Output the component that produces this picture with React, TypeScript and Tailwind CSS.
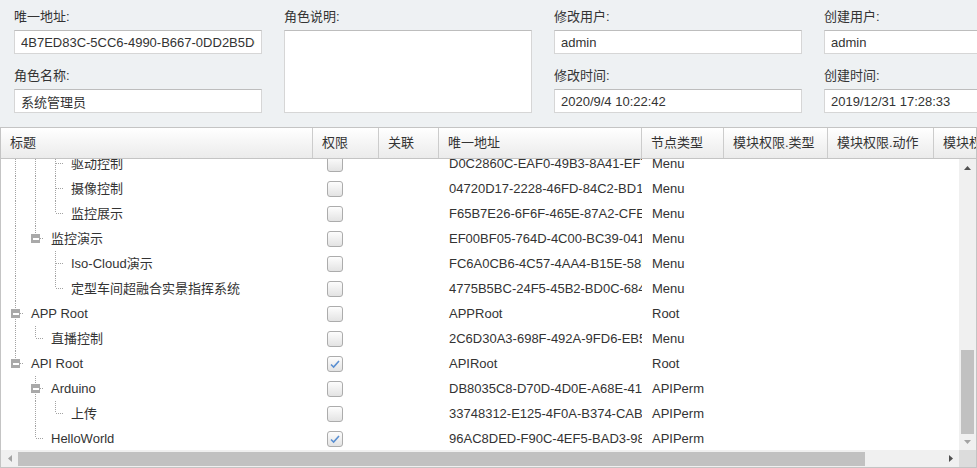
import React from 'react';

type Guide = 'n' | 'p' | 't' | 'l';

interface Row {
  title: string;
  guides: Guide[];
  folder?: boolean;
  checked?: boolean;
  uid: string;
  type: string;
}

const rows: Row[] = [
  { title: '驱动控制', guides: ['p', 'p', 't'], uid: 'D0C2860C-EAF0-49B3-8A41-EF72A1C3D5B0', type: 'Menu' },
  { title: '摄像控制', guides: ['p', 'p', 't'], uid: '04720D17-2228-46FD-84C2-BD1E9A0C7F31', type: 'Menu' },
  { title: '监控展示', guides: ['p', 'p', 'l'], uid: 'F65B7E26-6F6F-465E-87A2-CFE0B3D41A27', type: 'Menu' },
  { title: '监控演示', guides: ['p', 'l'], folder: true, uid: 'EF00BF05-764D-4C00-BC39-041A7D2E9C86', type: 'Menu' },
  { title: 'Iso-Cloud演示', guides: ['p', 'n', 't'], uid: 'FC6A0CB6-4C57-4AA4-B15E-58D3E07A2B19', type: 'Menu' },
  { title: '定型车间超融合实景指挥系统', guides: ['p', 'n', 'l'], uid: '4775B5BC-24F5-45B2-BD0C-684F1E2A9D03', type: 'Menu' },
  { title: 'APP Root', guides: ['t'], folder: true, uid: 'APPRoot', type: 'Root' },
  { title: '直播控制', guides: ['p', 'l'], uid: '2C6D30A3-698F-492A-9FD6-EB5C4A1D8E72', type: 'Menu' },
  { title: 'API Root', guides: ['l'], folder: true, checked: true, uid: 'APIRoot', type: 'Root' },
  { title: 'Arduino', guides: ['n', 't'], folder: true, uid: 'DB8035C8-D70D-4D0E-A68E-41C7B2F09A5D', type: 'APIPerm' },
  { title: '上传', guides: ['n', 'p', 'l'], uid: '33748312-E125-4F0A-B374-CAB0D6E1F842', type: 'APIPerm' },
  { title: 'HelloWorld', guides: ['n', 'l'], checked: true, uid: '96AC8DED-F90C-4EF5-BAD3-98E1A4C7B260', type: 'APIPerm' },
];

const columns = [
  { label: '标题', w: 'w-[312px]' },
  { label: '权限', w: 'w-[66px]' },
  { label: '关联', w: 'w-[60px]' },
  { label: '唯一地址', w: 'w-[203px]' },
  { label: '节点类型', w: 'w-[82px]' },
  { label: '模块权限.类型', w: 'w-[104px]' },
  { label: '模块权限.动作', w: 'w-[106px]' },
  { label: '模块权限.路径', w: 'w-[140px]' },
];

function GuideCell({ kind, own, folder }: { kind: Guide; own: boolean; folder?: boolean }) {
  const dot = { stroke: '#a3a3a3', strokeWidth: 1, strokeDasharray: '1 1' };
  return (
    <svg width="20" height="25" className="shrink-0" shapeRendering="crispEdges">
      {(kind === 'p' || kind === 't') && <line x1="10.5" y1="0" x2="10.5" y2="25" {...dot} />}
      {kind === 'l' && <line x1="10.5" y1="0" x2="10.5" y2="12" {...dot} />}
      {own && !folder && <line x1="11" y1="12.5" x2="19" y2="12.5" {...dot} />}
      {own && folder && (
        <>
          <line x1="15" y1="12.5" x2="19" y2="12.5" {...dot} />
          <rect x="6" y="8" width="9" height="9" fill="#a9a9a9" />
          <rect x="7.5" y="12" width="6" height="1.5" fill="#ffffff" />
        </>
      )}
    </svg>
  );
}

function Checkbox({ checked }: { checked?: boolean }) {
  return (
    <span className="flex w-[16px] h-[16px] items-center justify-center rounded-[3px] border border-[#acacac] bg-linear-to-b from-[#fdfdfd] to-[#e3e3e3]">
      {checked && (
        <svg width="12" height="12" viewBox="0 0 12 12">
          <path d="M2 6.5 L4.6 9 L10 3" fill="none" stroke="#5a8fd1" strokeWidth="1.6" />
        </svg>
      )}
    </span>
  );
}

function Field({ label, value }: { label: string; value: string }) {
  return (
    <div className="flex flex-col">
      <div className="h-[20px] leading-[20px]">{label}</div>
      <input
        readOnly
        value={value}
        className="mt-[3px] h-[24px] w-[248px] border border-[#d6d6d6] border-t-[#bdbdbd] bg-white px-[6px] text-[13px] text-[#333] outline-none"
      />
    </div>
  );
}

export default function App() {
  return (
    <div className="w-[977px] h-[468px] overflow-hidden bg-[#eef1f3] text-[13px] text-[#333] font-['Liberation_Sans','Noto_Sans_CJK_SC',sans-serif]">
      {/* 表单 */}
      <div className="flex gap-x-[22px] pl-[14px] pt-[7px] h-[127px]">
        <div className="flex flex-col gap-y-[12px]">
          <Field label="唯一地址:" value="4B7ED83C-5CC6-4990-B667-0DD2B5D0A1F2" />
          <Field label="角色名称:" value="系统管理员" />
        </div>
        <div className="flex flex-col">
          <div className="h-[20px] leading-[20px]">角色说明:</div>
          <textarea readOnly className="mt-[3px] h-[83px] w-[248px] resize-none border border-[#d6d6d6] border-t-[#bdbdbd] bg-white outline-none" />
        </div>
        <div className="flex flex-col gap-y-[12px]">
          <Field label="修改用户:" value="admin" />
          <Field label="修改时间:" value="2020/9/4 10:22:42" />
        </div>
        <div className="flex flex-col gap-y-[12px]">
          <Field label="创建用户:" value="admin" />
          <Field label="创建时间:" value="2019/12/31 17:28:33" />
        </div>
      </div>

      {/* 表格 */}
      <div className="flex h-[341px] flex-col border border-[#c4c4c4] bg-white">
        <div className="flex h-[31px] shrink-0 overflow-hidden border-b border-[#c4c4c4] bg-linear-to-b from-[#ffffff] to-[#ebebeb]">
          {columns.map((c) => (
            <div key={c.label} className={`${c.w} shrink-0 flex items-center whitespace-nowrap border-r border-[#cccccc] pl-[9px]`}>
              {c.label}
            </div>
          ))}
        </div>

        <div className="flex min-h-0 flex-1">
          <div className="flex-1 overflow-hidden">
            <div className="-mt-[8px]">
              {rows.map((r) => (
                <div key={r.title} className="flex h-[25px] items-center whitespace-nowrap">
                  <div className="flex w-[312px] shrink-0 items-center pl-[4px]">
                    {r.guides.map((g, i) => (
                      <GuideCell key={i} kind={g} own={i === r.guides.length - 1} folder={r.folder} />
                    ))}
                    <span className="ml-[6px]">{r.title}</span>
                  </div>
                  <div className="flex w-[66px] shrink-0 pl-[14px]">
                    <Checkbox checked={r.checked} />
                  </div>
                  <div className="w-[60px] shrink-0" />
                  <div className="w-[203px] shrink-0 overflow-hidden pl-[10px]">{r.uid}</div>
                  <div className="w-[82px] shrink-0 pl-[10px]">{r.type}</div>
                  <div className="w-[350px] shrink-0" />
                </div>
              ))}
            </div>
          </div>
          <div className="flex w-[17px] shrink-0 flex-col bg-[#f0f0f0]">
            <div className="flex h-[17px] items-center justify-center">
              <svg width="7" height="4"><path d="M0 4 L3.5 0 L7 4 Z" fill="#505050" /></svg>
            </div>
            <div className="flex flex-1 flex-col justify-end">
              <div className="mx-[2px] h-[84px] bg-[#c1c1c1]" />
            </div>
            <div className="flex h-[16px] items-center justify-center">
              <svg width="7" height="4"><path d="M0 0 L7 0 L3.5 4 Z" fill="#a3a3a3" /></svg>
            </div>
          </div>
        </div>

        <div className="flex h-[17px] shrink-0 bg-[#f0f0f0]">
          <div className="flex w-[17px] items-center justify-center">
            <svg width="4" height="7"><path d="M4 0 L4 7 L0 3.5 Z" fill="#a3a3a3" /></svg>
          </div>
          <div className="flex flex-1 items-start pt-[2px]">
            <div className="h-[14px] w-[847px] bg-[#c1c1c1]" />
          </div>
          <div className="flex w-[17px] items-center justify-center">
            <svg width="4" height="7"><path d="M0 0 L4 3.5 L0 7 Z" fill="#505050" /></svg>
          </div>
          <div className="w-[17px] bg-[#dcdcdc]" />
        </div>
      </div>
    </div>
  );
}
